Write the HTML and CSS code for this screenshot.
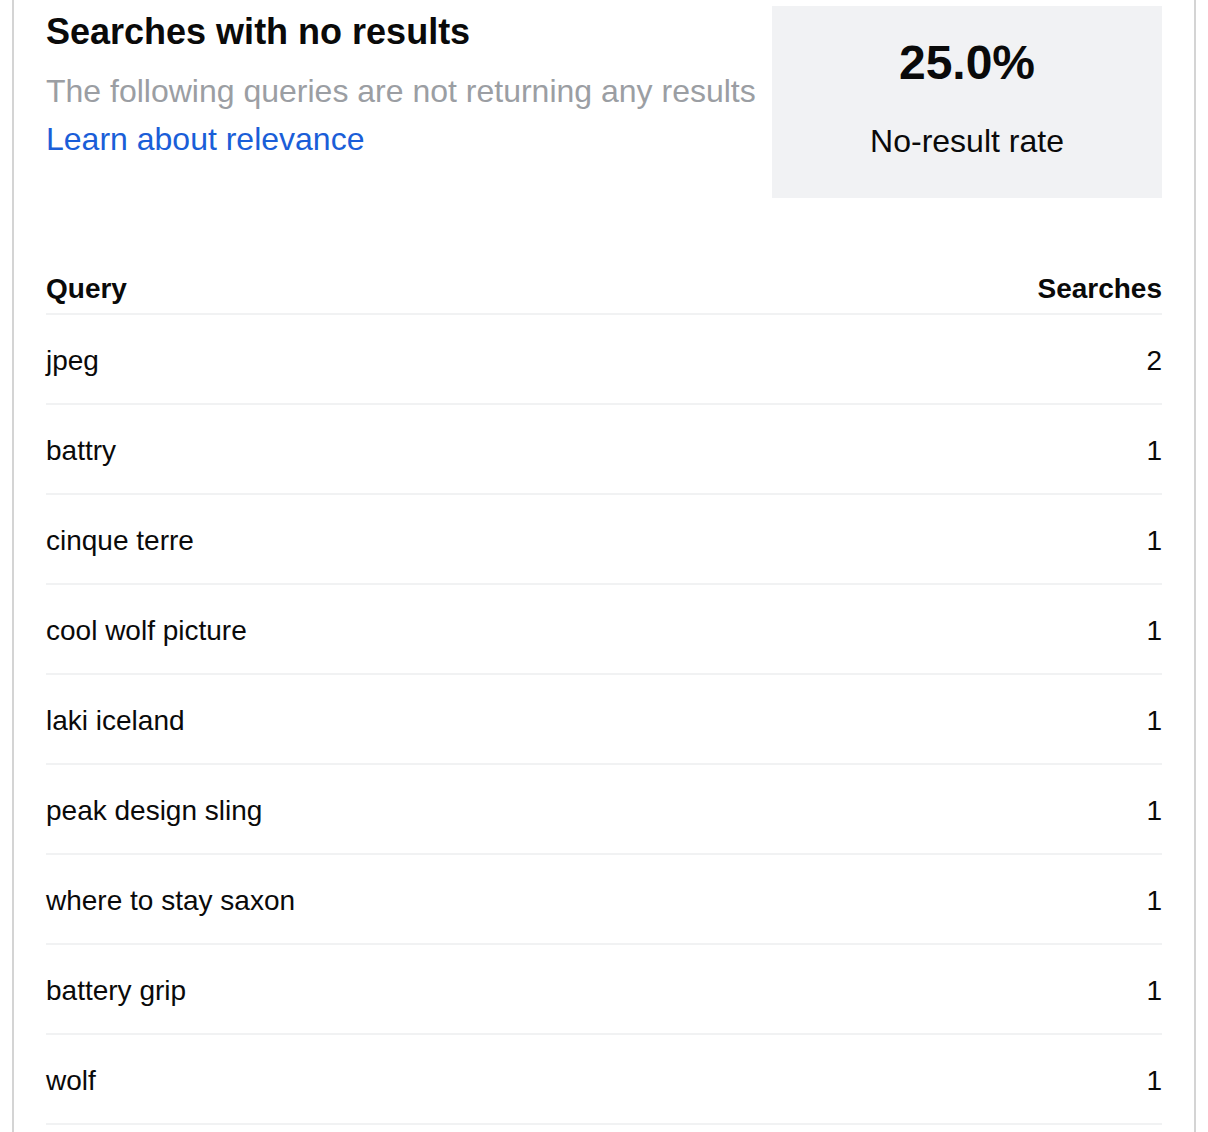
FILE: index.html
```html
<!DOCTYPE html>
<html lang="en">
<head>
<meta charset="utf-8">
<title>Searches with no results</title>
<link rel="stylesheet" href="styles.css">
</head>
<body>
<section class="card">
  <div class="top">
    <div class="intro">
      <h1 class="title">Searches with no results</h1>
      <p class="subtitle">The following queries are not returning any results</p>
      <a class="link" href="#">Learn about relevance</a>
    </div>
    <div class="stat">
      <div class="stat-value">25.0%</div>
      <div class="stat-label">No-result rate</div>
    </div>
  </div>
  <table class="queries">
    <thead>
      <tr><th class="col-q">Query</th><th class="col-n">Searches</th></tr>
    </thead>
    <tbody>
      <tr><td class="col-q">jpeg</td><td class="col-n">2</td></tr>
      <tr><td class="col-q">battry</td><td class="col-n">1</td></tr>
      <tr><td class="col-q">cinque terre</td><td class="col-n">1</td></tr>
      <tr><td class="col-q">cool wolf picture</td><td class="col-n">1</td></tr>
      <tr><td class="col-q">laki iceland</td><td class="col-n">1</td></tr>
      <tr><td class="col-q">peak design sling</td><td class="col-n">1</td></tr>
      <tr><td class="col-q">where to stay saxon</td><td class="col-n">1</td></tr>
      <tr><td class="col-q">battery grip</td><td class="col-n">1</td></tr>
      <tr><td class="col-q">wolf</td><td class="col-n">1</td></tr>
    </tbody>
  </table>
</section>
</body>
</html>
```
FILE: styles.css
```css
html, body {
  margin: 0;
  padding: 0;
  background: #ffffff;
}

body {
  font-family: "Liberation Sans", Arial, Helvetica, sans-serif;
  color: #0a0a0a;
}

.card {
  margin: 0 12px;
  padding: 6px 32px 60px;
  border-left: 2px solid #d4d4d4;
  border-right: 2px solid #d4d4d4;
  background: #ffffff;
}

.top {
  display: flex;
  align-items: flex-start;
}

.intro {
  flex: 1;
  padding-top: 6px;
}

.title {
  margin: 0;
  font-size: 36px;
  line-height: 40px;
  font-weight: 700;
  color: #0a0a0a;
}

.subtitle {
  margin: 15px 0 0;
  font-size: 32px;
  line-height: 48px;
  color: #9b9ea3;
}

.link {
  display: block;
  font-size: 32px;
  line-height: 48px;
  color: #1a5ed8;
  text-decoration: none;
}

.stat {
  width: 390px;
  box-sizing: border-box;
  background: #f1f2f4;
  padding: 29px 0 37px;
  text-align: center;
  display: flex;
  flex-direction: column;
  gap: 30px;
}

.stat-value {
  font-size: 48px;
  line-height: 56px;
  font-weight: 700;
  color: #0a0a0a;
}

.stat-label {
  font-size: 32px;
  line-height: 40px;
  color: #0a0a0a;
}

.queries {
  width: 100%;
  margin-top: 46px;
  border-collapse: collapse;
  font-size: 28px;
  line-height: 32px;
}

.queries th {
  padding: 29px 0 8px;
  font-weight: 700;
  border-bottom: 2px solid #f1f2f3;
}

.queries td {
  padding: 30px 0 26px;
  border-bottom: 2px solid #f1f2f3;
}

.col-q {
  text-align: left;
}

.col-n {
  text-align: right;
}
```
